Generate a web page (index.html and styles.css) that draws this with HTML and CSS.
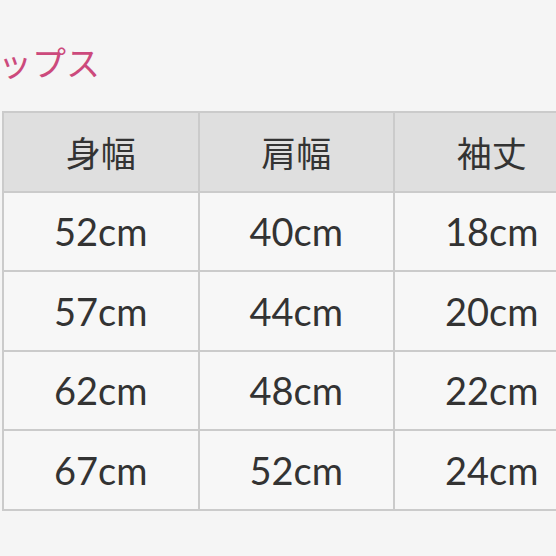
FILE: index.html
```html
<!DOCTYPE html>
<html lang="ja">
<head>
<meta charset="utf-8">
<link rel="stylesheet" href="styles.css">
</head>
<body>
<div class="page">
  <h2 class="title">トップス</h2>
  <div class="table">
    <div class="cell head">身幅</div>
    <div class="cell head">肩幅</div>
    <div class="cell head">袖丈</div>
    <div class="cell">52cm</div>
    <div class="cell">40cm</div>
    <div class="cell">18cm</div>
    <div class="cell">57cm</div>
    <div class="cell">44cm</div>
    <div class="cell">20cm</div>
    <div class="cell">62cm</div>
    <div class="cell">48cm</div>
    <div class="cell">22cm</div>
    <div class="cell">67cm</div>
    <div class="cell">52cm</div>
    <div class="cell">24cm</div>
  </div>
</div>
</body>
</html>
```
FILE: styles.css
```css
html, body {
  margin: 0;
  padding: 0;
  background: #f5f5f5;
  overflow: hidden;
}
.page {
  width: 556px;
  height: 556px;
  overflow: hidden;
}
.title {
  margin: 45px 0 0 -36px;
  height: 34px;
  font-family: "Noto Sans CJK JP", sans-serif;
  font-weight: 400;
  font-size: 34px;
  line-height: 34px;
  color: #cc4a7c;
  white-space: nowrap;
}
.table {
  margin: 32px 0 0 2px;
  width: 600px;
  display: grid;
  grid-template-columns: 193.5px 193.5px 193.5px;
  grid-auto-rows: 77.5px;
  gap: 2px;
  padding: 2px 0 2px 2px;
  background: #cbcbcb;
}
.cell {
  background: #f7f7f7;
  display: flex;
  align-items: center;
  justify-content: center;
  font-family: Lato, "Noto Sans CJK JP", sans-serif;
  font-size: 38px;
  color: #333333;
}
.head {
  background: #dfdfdf;
  font-family: "Noto Sans CJK JP", sans-serif;
  font-size: 35px;
}
```
